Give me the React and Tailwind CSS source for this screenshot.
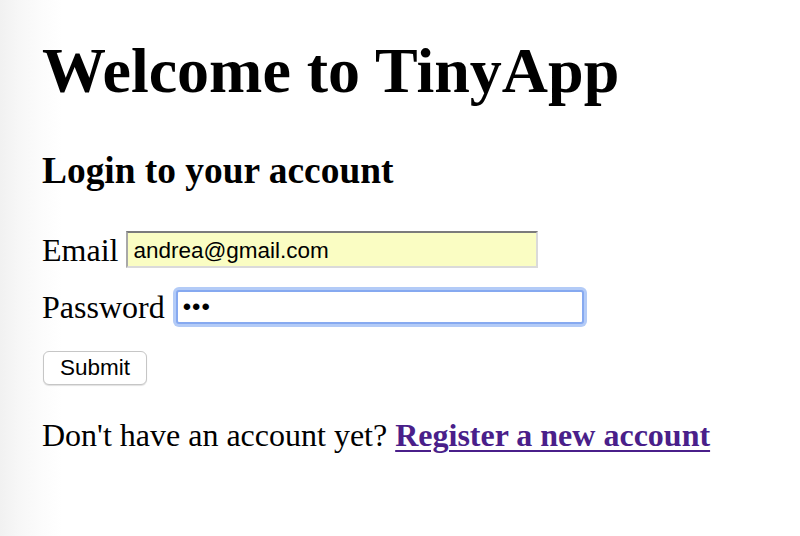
import React, { useState } from 'react';

const App = () => {
  const [email, setEmail] = useState('andrea@gmail.com');
  const [password, setPassword] = useState('abc');

  return (
    <div className="min-h-[536px] w-[800px] bg-[linear-gradient(to_right,#f1f1f1_0px,#f7f7f7_20px,#fcfcfc_42px,#ffffff_62px)] font-['Liberation_Serif',serif] text-[32px] text-black">
      <div className="pl-[42px] pt-[34px]">
        <h1 className="text-[64px] font-bold leading-[74px] mb-[41px]">Welcome to TinyApp</h1>
        <h3 className="text-[37.4px] font-bold leading-[43px] mb-[39px]">Login to your account</h3>

        <form className="flex flex-col" onSubmit={(e) => e.preventDefault()}>
          <div className="flex items-center h-[37px] mb-[21px]">
            <label htmlFor="email">Email</label>
            <input
              id="email"
              type="email"
              value={email}
              onChange={(e) => setEmail(e.target.value)}
              className="ml-[8px] w-[412px] h-[37px] px-[5px] pt-[3px] bg-[#fafdc3] border-2 border-t-[#7b7b7b] border-l-[#a8a8a8] border-r-[#dadada] border-b-[#dadada] font-['Liberation_Sans',sans-serif] text-[22.5px] outline-none"
            />
          </div>
          <div className="flex items-center h-[36px] mb-[15px]">
            <label htmlFor="password">Password</label>
            <input
              id="password"
              type="password"
              value={password}
              onChange={(e) => setPassword(e.target.value)}
              className="ml-[11px] w-[408px] h-[34px] px-[5px] bg-white border-2 border-[#86a9f0] rounded-[3px] shadow-[0_0_0_3px_#b3cbf7] font-['Liberation_Sans',sans-serif] text-[24px] tracking-[1px] outline-none"
            />
          </div>
          <div className="mb-[29px]">
            <button
              type="submit"
              className="ml-[1px] w-[104px] h-[34px] bg-white border border-[#c6c6c6] rounded-[6px] shadow-[0_1px_1px_rgba(0,0,0,0.12)] font-['Liberation_Sans',sans-serif] text-[22.5px] leading-none"
            >
              Submit
            </button>
          </div>
        </form>

        <p className="leading-[37px]">
          Don't have an account yet?{' '}
          <a href="#" className="font-bold text-[#4a1f8a] underline decoration-[2px] underline-offset-[4px]">
            Register a new account
          </a>
        </p>
      </div>
    </div>
  );
};

export default App;
